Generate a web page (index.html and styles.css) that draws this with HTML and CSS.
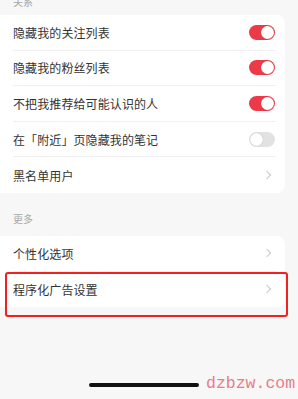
FILE: index.html
```html
<!DOCTYPE html>
<html lang="zh">
<head>
<meta charset="utf-8">
<link rel="stylesheet" href="styles.css">
</head>
<body>
<div class="page">
  <div class="section-title first">关系</div>
  <div class="card">
    <div class="row"><span class="label">隐藏我的关注列表</span><span class="toggle on"></span></div>
    <div class="row"><span class="label">隐藏我的粉丝列表</span><span class="toggle on"></span></div>
    <div class="row"><span class="label">不把我推荐给可能认识的人</span><span class="toggle on"></span></div>
    <div class="row"><span class="label">在「附近」页隐藏我的笔记</span><span class="toggle"></span></div>
    <div class="row last"><span class="label">黑名单用户</span><span class="chev"></span></div>
  </div>
  <div class="section-title">更多</div>
  <div class="card">
    <div class="row"><span class="label">个性化选项</span><span class="chev"></span></div>
    <div class="row last highlighted"><span class="label">程序化广告设置</span><span class="chev"></span><span class="mark"></span></div>
  </div>
  <div class="spacer"></div>
  <div class="home-bar"><span class="indicator"></span><span class="watermark">dzbzw.com</span></div>
</div>
</body>
</html>
```
FILE: styles.css
```css
html, body { margin: 0; padding: 0; }
body {
  background: #f7f7f8;
  font-family: "Noto Sans CJK SC", "Noto Sans", sans-serif;
  width: 298px;
  height: 399px;
  overflow: hidden;
}
.page { display: flex; flex-direction: column; height: 399px; }
.section-title {
  font-size: 10px;
  color: #a8a8a8;
  padding-left: 13px;
  height: 34px;
  line-height: 34px;
  margin-top: 9px;
}
.section-title.first {
  height: 24px;
  line-height: 24px;
  margin-top: -10px;
  margin-bottom: 1px;
}
.card {
  background: #fff;
  width: 285px;
  border-radius: 0 8px 8px 0;
}
.row {
  position: relative;
  height: 35.6px;
  display: flex;
  align-items: center;
  justify-content: space-between;
  margin-left: 13px;
  margin-right: 9px;
  border-bottom: 1px solid #f0f0f0;
  box-sizing: border-box;
}
.row.last { border-bottom: none; }
.label { font-size: 12px; color: #333; letter-spacing: 0.1px; }
.toggle {
  width: 26px; height: 15px; border-radius: 8px;
  background: #e2e2e2; position: relative;
  margin-right: 1px;
}
.toggle::after {
  content: ""; position: absolute; top: 1px; left: 1px;
  width: 13px; height: 13px; border-radius: 50%;
  background: #fff; box-shadow: 0 0 1px rgba(0,0,0,0.3);
}
.toggle.on { background: #ec3a48; }
.toggle.on::after { left: 12px; }
.chev {
  width: 5px; height: 5px;
  border-top: 1.2px solid #c8c8c8; border-right: 1.2px solid #c8c8c8;
  transform: rotate(45deg);
  margin-right: 6px;
}
.mark {
  position: absolute;
  left: -8px; right: -12px; top: 0px; bottom: -10px;
  border: 2px solid #ee2222;
  border-radius: 3px;
}
.spacer { flex: 1; }
.home-bar {
  height: 26px;
  position: relative;
  display: flex;
  justify-content: center;
}
.indicator {
  width: 110px; height: 4px; border-radius: 2px; background: #111;
  margin-top: 10px; margin-left: -10px;
}
.watermark {
  position: absolute; left: 206px; top: 1px;
  font-family: "Liberation Mono", "DejaVu Sans Mono", monospace;
  font-size: 16.5px; color: #e77d87; letter-spacing: 0px;
}
```
